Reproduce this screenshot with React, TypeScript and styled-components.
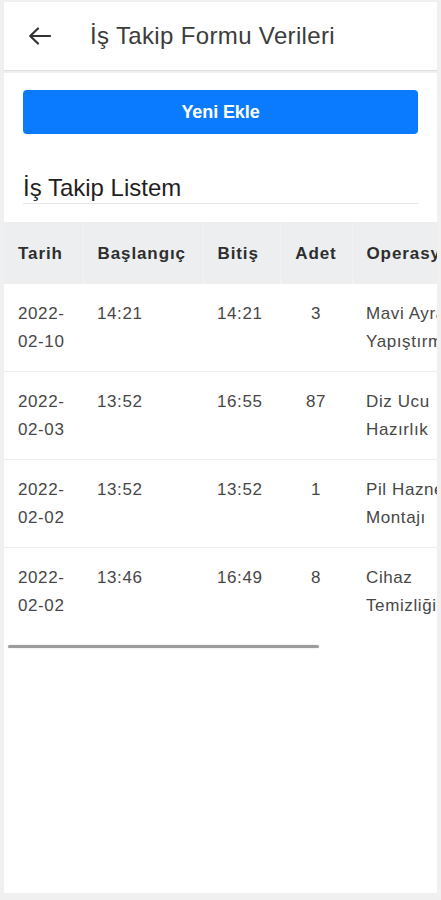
import styled, { createGlobalStyle } from 'styled-components';

const GlobalStyle = createGlobalStyle`
  html, body {
    margin: 0;
    padding: 0;
    background: #f0f0f0;
  }
  body {
    font-family: 'Liberation Sans', Arial, sans-serif;
  }
  * {
    box-sizing: border-box;
  }
`;

const Screen = styled.div`
  padding: 2px 4px 7px;
  display: flex;
  flex-direction: column;
  gap: 3px;
  min-height: 900px;
`;

const TopBar = styled.header`
  height: 68px;
  background: #ffffff;
  display: flex;
  align-items: center;
  padding-left: 21px;
  box-shadow: 0 1px 1px rgba(0, 0, 0, 0.06);
`;

const BackButton = styled.button`
  width: 28px;
  height: 28px;
  padding: 0;
  border: none;
  background: transparent;
  display: flex;
  align-items: center;
  justify-content: center;
  color: #333;
  cursor: pointer;
`;

const PageTitle = styled.h1`
  margin: 0 0 0 37px;
  font-size: 24px;
  font-weight: 400;
  color: #3c3c3c;
  letter-spacing: 0.35px;
`;

const Main = styled.main`
  flex: 1;
  background: #ffffff;
  padding: 17px 19px 0;
  display: flex;
  flex-direction: column;
`;

const AddButton = styled.button`
  height: 44px;
  width: 100%;
  border: none;
  border-radius: 4px;
  background: #0a7bff;
  color: #ffffff;
  font-family: inherit;
  font-size: 18px;
  font-weight: 700;
  letter-spacing: -0.1px;
  cursor: pointer;
`;

const SectionTitle = styled.h2`
  margin: 38px 0 0;
  font-size: 24px;
  font-weight: 400;
  line-height: 31px;
  color: #1f1f1f;
  border-bottom: 1px solid #e6e6e6;
`;

const TableScroll = styled.div`
  margin: 18px -19px 0;
  overflow: hidden;
`;

const Table = styled.table`
  width: 640px;
  table-layout: fixed;
  border-collapse: collapse;
  font-size: 17px;
  line-height: 28px;
`;

const HeadCell = styled.th<{ $w: number; $center?: boolean }>`
  width: ${p => p.$w}px;
  padding: 18px 14px 15px;
  background: #eceef0;
  color: #2e2e2e;
  font-weight: 700;
  letter-spacing: 0.9px;
  text-align: ${p => (p.$center ? 'center' : 'left')};
  white-space: nowrap;
  border-left: 1px solid #f2f3f4;

  &:first-child {
    border-left: none;
  }
`;

const Cell = styled.td<{ $center?: boolean }>`
  padding: 16px 14px 15px;
  color: #474747;
  letter-spacing: 0.6px;
  vertical-align: top;
  text-align: ${p => (p.$center ? 'center' : 'left')};
  border-top: 1px solid #eeeeee;
`;

const ScrollThumb = styled.div`
  margin: 10px 0 0 -15px;
  width: 311px;
  height: 3px;
  border-radius: 2px;
  background: #9c9c9c;
  box-shadow: 0 0 2px rgba(0, 0, 0, 0.15);
`;

const columns = [
  { label: 'Tarih', width: 79 },
  { label: 'Başlangıç', width: 120 },
  { label: 'Bitiş', width: 77 },
  { label: 'Adet', width: 72, center: true },
  { label: 'Operasyon', width: 148 },
  { label: 'Açıklama', width: 144 },
];

const rows = [
  { date: '2022-02-10', start: '14:21', end: '14:21', count: 3, op: 'Mavi Ayraç Yapıştırma', note: '-' },
  { date: '2022-02-03', start: '13:52', end: '16:55', count: 87, op: 'Diz Ucu Hazırlık', note: '-' },
  { date: '2022-02-02', start: '13:52', end: '13:52', count: 1, op: 'Pil Hazne Montajı', note: '-' },
  { date: '2022-02-02', start: '13:46', end: '16:49', count: 8, op: 'Cihaz Temizliği', note: '-' },
];

const BackArrow = () => (
  <svg width="23" height="18" viewBox="0 0 23 18" fill="none">
    <path d="M10 1.5 2.2 9l7.8 7.5M2.2 9H22" stroke="#333" strokeWidth="2.2" strokeLinecap="round" strokeLinejoin="round" />
  </svg>
);

export default function App() {
  return (
    <>
      <GlobalStyle />
      <Screen>
        <TopBar>
          <BackButton aria-label="Geri">
            <BackArrow />
          </BackButton>
          <PageTitle>İş Takip Formu Verileri</PageTitle>
        </TopBar>
        <Main>
          <AddButton>Yeni Ekle</AddButton>
          <SectionTitle>İş Takip Listem</SectionTitle>
          <TableScroll>
            <Table>
              <thead>
                <tr>
                  {columns.map(c => (
                    <HeadCell key={c.label} $w={c.width} $center={c.center}>
                      {c.label}
                    </HeadCell>
                  ))}
                </tr>
              </thead>
              <tbody>
                {rows.map((r, i) => (
                  <tr key={i}>
                    <Cell>{r.date.slice(0, 5)}<br />{r.date.slice(5)}</Cell>
                    <Cell>{r.start}</Cell>
                    <Cell>{r.end}</Cell>
                    <Cell $center>{r.count}</Cell>
                    <Cell>{r.op}</Cell>
                    <Cell>{r.note}</Cell>
                  </tr>
                ))}
              </tbody>
            </Table>
          </TableScroll>
          <ScrollThumb />
        </Main>
      </Screen>
    </>
  );
}
